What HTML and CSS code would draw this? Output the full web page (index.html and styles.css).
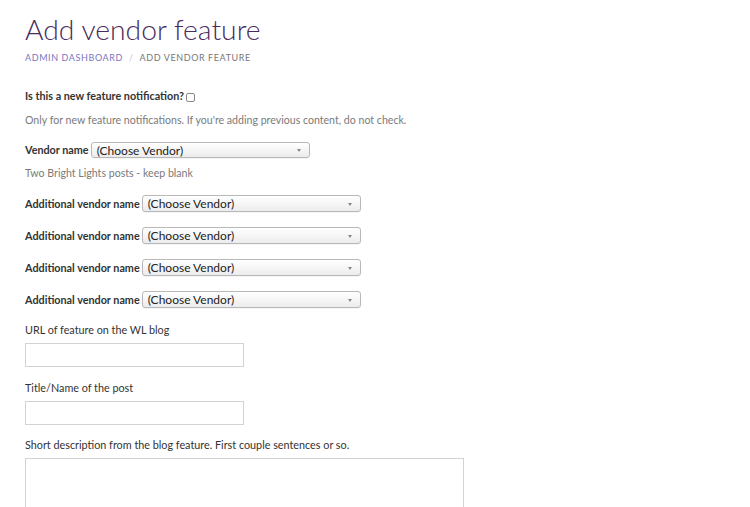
FILE: index.html
```html
<!DOCTYPE html>
<html>
<head>
<meta charset="utf-8">
<link rel="stylesheet" href="styles.css">
</head>
<body>
<div class="page">
  <h1 class="title">Add vendor feature</h1>
  <div class="crumbs"><a class="crumb-link">Admin Dashboard</a><span class="sep">/</span><span class="crumb-cur">Add Vendor Feature</span></div>

  <div class="row first"><label class="lbl">Is this a new feature notification?</label><span class="check"></span></div>
  <p class="help help1">Only for new feature notifications. If you're adding previous content, do not check.</p>

  <div class="row vendor"><label class="lbl">Vendor name</label><div class="select">(Choose Vendor)<span class="arrow"></span></div></div>
  <p class="help help2">Two Bright Lights posts - keep blank</p>

  <div class="row addl"><label class="lbl">Additional vendor name</label><div class="select">(Choose Vendor)<span class="arrow"></span></div></div>
  <div class="row addl"><label class="lbl">Additional vendor name</label><div class="select">(Choose Vendor)<span class="arrow"></span></div></div>
  <div class="row addl"><label class="lbl">Additional vendor name</label><div class="select">(Choose Vendor)<span class="arrow"></span></div></div>
  <div class="row addl"><label class="lbl">Additional vendor name</label><div class="select">(Choose Vendor)<span class="arrow"></span></div></div>

  <div class="field f1"><label class="flbl">URL of feature on the WL blog</label><div class="input"></div></div>
  <div class="field f2"><label class="flbl">Title/Name of the post</label><div class="input"></div></div>
  <div class="field f3"><label class="flbl">Short description from the blog feature. First couple sentences or so.</label><div class="textarea"></div></div>
</div>
</body>
</html>
```

FILE: styles.css
```css
html, body { margin: 0; padding: 0; background: #fff; }
body { font-family: Lato, "Open Sans", sans-serif; color: #333; overflow: hidden; height: 507px; }
.page { padding: 11px 25px 0 25px; display: flex; flex-direction: column; align-items: flex-start; }
.title { margin: 0; font-weight: 300; font-size: 28.3px; line-height: 36px; color: #4a2c5c; }
.crumbs { margin-top: 5px; font-size: 9px; letter-spacing: 0.6px; text-transform: uppercase; line-height: 12px; display: flex; }
.crumb-link { color: #7b74bf; }
.sep { color: #c8c8c8; margin: 0 6px; }
.crumb-cur { color: #777; }
.row { display: flex; align-items: center; }
.lbl { font-weight: 700; font-size: 10.8px; color: #333; line-height: 16px; }
.first { margin-top: 24px; height: 16px; }
.check { width: 7px; height: 7px; border: 1px solid #8a8a8a; border-radius: 2px; margin-left: 2px; margin-top: 2px; background: #fff; }
.help { margin: 0; font-size: 10.6px; line-height: 16px; color: #7a7a7a; }
.help1 { margin-top: 8px; }
.vendor { margin-top: 14px; height: 16px; }
.vendor .select { height: 16px; }
.help2 { margin-top: 7px; }
.addl { margin-top: 15px; height: 17px; }
.addl .select { height: 17px; line-height: 16px; }
.help2 + .addl { margin-top: 14px; }
.select { position: relative; margin-left: 2px; box-sizing: border-box; width: 219px; border: 1px solid #b8b8b8; border-radius: 3px; background: linear-gradient(#ffffff, #ececec); font-size: 12px; line-height: 15px; color: #222; padding-left: 5px; box-shadow: 0 1px 0 rgba(0,0,0,0.04); }
.arrow { position: absolute; right: 8px; top: 50%; margin-top: -1px; width: 0; height: 0; border-left: 2.5px solid transparent; border-right: 2.5px solid transparent; border-top: 3px solid #888; }
.field { display: flex; flex-direction: column; }
.f1 { margin-top: 14px; }
.f2 { margin-top: 13px; }
.f3 { margin-top: 12px; }
.flbl { font-size: 10.8px; line-height: 16px; color: #333; }
.input { margin-top: 5px; width: 219px; height: 24px; box-sizing: border-box; border: 1px solid #d3d3d3; background: #fff; }
.textarea { margin-top: 5px; width: 439px; height: 60px; box-sizing: border-box; border: 1px solid #d3d3d3; background: #fff; }
```
